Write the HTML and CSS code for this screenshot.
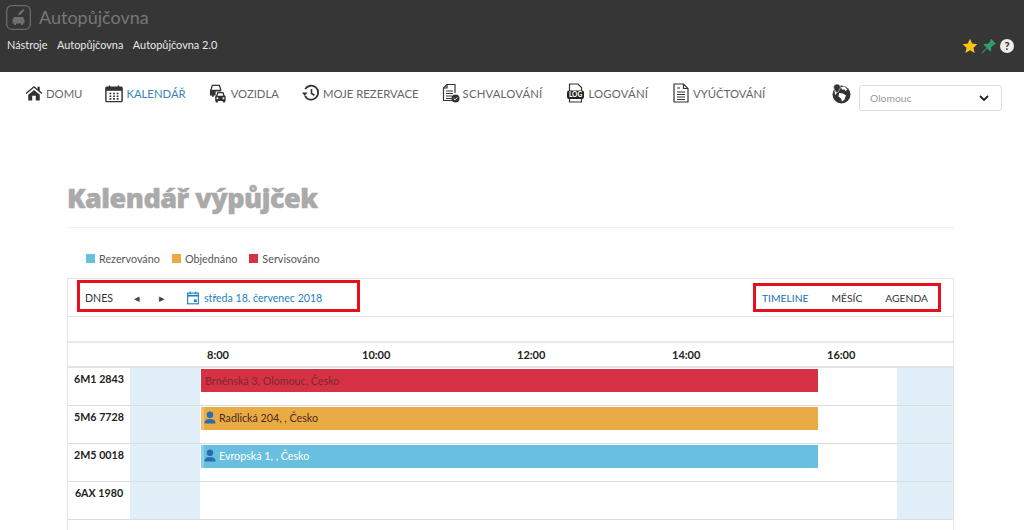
FILE: index.html
```html
<!DOCTYPE html>
<html lang="cs">
<head>
    <meta charset="UTF-8">
    <title>Kalendář výpůjček</title>
    <link rel="stylesheet" href="styles.css">
</head>
<body>
<div class="top">
    <div class="brand">
        <span class="brand-icon">
            <svg width="25" height="25" viewBox="0 0 25 25" fill="none">
                <rect x="0.700" y="0.700" width="23.600" height="23.600" rx="5" stroke="#6a6a6a" stroke-width="1.300"/>
                <path d="M6.500 18.500v-3.500l1.500-3h9l1.500 3v3.500h-1.500v1.500h-2v-1.500h-5v1.500h-2v-1.500z" fill="#6f6f6f"/>
                <path d="M12 10.500l1-3 4.500-3.500 1 1-3.500 4.500z" fill="#6f6f6f"/>
            </svg>
        </span>
        <span class="brand-name">Autopůjčovna</span>
    </div>
    <div class="top-row">
        <ul class="top-links">
            <li>Nástroje</li>
            <li>Autopůjčovna</li>
            <li>Autopůjčovna 2.0</li>
        </ul>
        <div class="top-icons">
            <svg width="16" height="16" viewBox="0 0 16 16"><path d="M8 .8l2.200 4.800 5.200.6-3.900 3.500 1.100 5.200L8 12.300l-4.600 2.600 1.100-5.200L.6 6.200l5.200-.6z" fill="#f5c518"/></svg>
            <svg width="16" height="16" viewBox="0 0 16 16"><path d="M10 .8l5 5-1 .8-1-.2-3 3 .2 3-1 1-3-3-4.500 4.600-.9.2.2-.9L5.600 9.700l-3-3 1-1 3 .2 3-3-.2-1z" fill="#2f9e6b"/></svg>
            <span class="help">?</span>
        </div>
    </div>
</div>

<nav class="nav">
    <a class="nav-item">
        <svg width="18" height="16" viewBox="0 0 20 18"><path d="M10 1L0.500 9l1 1.200L10 3.200l8.500 7 1-1.200-3-2.500V2h-2.500v2.400zM3.500 11v6.500h4.500V12h4v5.500h4.500V11L10 5.500z" fill="#333"/></svg>
        DOMU
    </a>
    <a class="nav-item active">
        <svg width="18" height="19" viewBox="0 0 20 20" fill="none"><rect x="1" y="3" width="18" height="16" rx="1" stroke="#333" stroke-width="1.600"/><rect x="1" y="3" width="18" height="4" fill="#333"/><path d="M5 1v4M15 1v4" stroke="#333" stroke-width="1.600"/><path d="M5 10h2M9 10h2M13 10h2M5 13h2M9 13h2M13 13h2M5 16h2M9 16h2M13 16h2" stroke="#333" stroke-width="1.800"/></svg>
        KALENDÁŘ
    </a>
    <a class="nav-item">
        <svg width="19" height="19" viewBox="0 0 20 20" fill="none">
            <path d="M2 6.500l1.500-5h7.500l1.500 5" stroke="#333" stroke-width="1.400"/>
            <path d="M1 6h12v2H7v4H5v1.500H3V12H1z" fill="#333"/>
            <path d="M7 19.500v-1.500h-.5v-5l1-1 1.300-3.500h6.400l1.300 3.500 1 1v5H17v1.500h-2.500V18h-5v1.500z" fill="#333"/>
            <path d="M9 12.300h6l-.8-2.500H9.800z" fill="#fff"/>
            <circle cx="8.800" cy="15" r="1" fill="#fff"/>
            <circle cx="15.200" cy="15" r="1" fill="#fff"/>
        </svg>
        VOZIDLA
    </a>
    <a class="nav-item">
        <svg width="18" height="18" viewBox="0 0 18 18" fill="none"><path d="M3.200 5A7 7 0 1 1 3 12" stroke="#333" stroke-width="1.800"/><path d="M0 8.500h5.500L2.700 12z" fill="#333"/><path d="M9.500 5v4.500l3 1.800" stroke="#333" stroke-width="1.600"/></svg>
        MOJE REZERVACE
    </a>
    <a class="nav-item spaced">
        <svg width="18" height="20" viewBox="0 0 18 20" fill="none"><path d="M11 17.500H1.500V5L5 1.500h8V10" stroke="#333" stroke-width="1.200"/><path d="M1.500 5H5V1.500M4 8h7M4 10.500h7M4 13h6M4 15.500h6" stroke="#333" stroke-width="1.200"/><circle cx="13.500" cy="15.500" r="4" fill="#333"/><path d="M11.700 15.500l1.300 1.300 2.300-2.300" stroke="#fff" stroke-width="1"/></svg>
        SCHVALOVÁNÍ
    </a>
    <a class="nav-item spaced log">
        <svg width="17" height="20" viewBox="0 0 17 20" fill="none"><path d="M2.500 8V1h8.500l3.500 3.500V8M2.500 15v4h12v-4" stroke="#333" stroke-width="1.200"/><rect x="0" y="7.500" width="17" height="8.500" rx="2" fill="#222"/><text x="8.500" y="14.200" text-anchor="middle" class="log-text">LOG</text></svg>
        LOGOVÁNÍ
    </a>
    <a class="nav-item bill">
        <svg width="16" height="20" viewBox="0 0 16 20" fill="none"><path d="M1 1h9.500L15 5.500V19H1z" stroke="#333" stroke-width="1.200"/><path d="M10.500 1v4.500H15M4 5h3M4 9h8M4 11.500h8M4 14h8M4 16.500h8" stroke="#333" stroke-width="1.200"/></svg>
        VYÚČTOVÁNÍ
    </a>
    <div class="place">
        <svg class="globe" width="19" height="20" viewBox="0 0 19 20"><circle cx="9.500" cy="10.500" r="9" fill="#333"/><path d="M9 3l3.500-.5 3 3-2 1.500-1-1.500H10zM7 9l4 .5 3 2-1.500 4-2.500 2-1-3-2.500-2zM2.500 6.500L5 9l-2 2z" fill="#fff"/><path d="M5 0a3.400 3.400 0 0 1 3.400 3.400C8.400 5.500 5 9 5 9S1.600 5.500 1.600 3.400A3.400 3.400 0 0 1 5 0z" fill="#333" stroke="#fff" stroke-width=".6"/></svg>
        <div class="select">
            <span>Olomouc</span>
            <svg width="10" height="7" viewBox="0 0 10 7" fill="none"><path d="M1 1l4 4 4-4" stroke="#222" stroke-width="1.800"/></svg>
        </div>
    </div>
</nav>

<main class="page">
    <h1>Kalendář výpůjček</h1>
    <ul class="legend">
        <li><i class="sw blue"></i>Rezervováno</li>
        <li><i class="sw orange"></i>Objednáno</li>
        <li><i class="sw red"></i>Servisováno</li>
    </ul>

    <div class="calendar">
        <div class="toolbar">
            <div class="tool-left mark">
                <span class="today">DNES</span>
                <span class="arrow">◂</span>
                <span class="arrow">▸</span>
                <span class="date">
                    <svg width="12" height="14" viewBox="0 0 13 14" fill="none"><rect x="0.700" y="1.700" width="11.600" height="11.600" stroke="#1a7fc1" stroke-width="1.200"/><path d="M0.700 4.500h11.600" stroke="#1a7fc1" stroke-width="1.800"/><path d="M3.500 0v3M9.500 0v3" stroke="#1a7fc1" stroke-width="1.200"/><rect x="7.500" y="8.500" width="3" height="3" fill="#1a7fc1"/></svg>
                    středa 18. červenec 2018
                </span>
            </div>
            <div class="tool-right mark">
                <span class="current">TIMELINE</span>
                <span>MĚSÍC</span>
                <span>AGENDA</span>
            </div>
        </div>
        <div class="spacer"></div>
        <div class="hours">
            <span>8:00</span>
            <span>10:00</span>
            <span>12:00</span>
            <span>14:00</span>
            <span>16:00</span>
        </div>
        <div class="row">
            <div class="car">6M1 2843</div>
            <div class="off"></div>
            <div class="track"><div class="bar red dark">Brněnská 3, Olomouc, Česko</div></div>
            <div class="off"></div>
        </div>
        <div class="row">
            <div class="car">5M6 7728</div>
            <div class="off"></div>
            <div class="track"><div class="bar orange edge">
                <svg class="user" width="12" height="13" viewBox="0 0 13 14"><circle cx="6.500" cy="4" r="3.500"/><path d="M0.500 13.500c0-3.500 2-5 6-5s6 1.500 6 5z"/></svg>
                Radlická 204, , Česko</div></div>
            <div class="off"></div>
        </div>
        <div class="row">
            <div class="car">2M5 0018</div>
            <div class="off"></div>
            <div class="track"><div class="bar blue edge light">
                <svg class="user" width="12" height="13" viewBox="0 0 13 14"><circle cx="6.500" cy="4" r="3.500"/><path d="M0.500 13.500c0-3.500 2-5 6-5s6 1.500 6 5z"/></svg>
                Evropská 1, , Česko</div></div>
            <div class="off"></div>
        </div>
        <div class="row">
            <div class="car">6AX 1980</div>
            <div class="off"></div>
            <div class="track"></div>
            <div class="off"></div>
        </div>
    </div>
</main>
</body>
</html>
```

FILE: styles.css
```css
* {
    padding: 0;
    margin: 0;
    list-style: none;
    box-sizing: border-box;
}

body {
    font-family: Lato, "Open Sans", "Liberation Sans", sans-serif;
    font-size: 11px;
    color: #333;
    background: #fff;
    overflow: hidden;
}

.top {
    height: 72px;
    background: #363636;
    color: #eee;
    padding: 5px 7px 0 6px;
}

.brand {
    display: flex;
    align-items: center;
    gap: 8px;
    height: 25px;
}

.brand-icon {
    display: flex;
}

.brand-name {
    font-size: 18px;
    line-height: 22px;
    margin-bottom: 2px;
    color: #777;
}

.top-row {
    display: flex;
    justify-content: space-between;
    align-items: center;
    margin-top: 5px;
    padding-left: 1px;
}

.top-links {
    display: flex;
    gap: 9.500px;
    font-size: 10.900px;
    color: #e8e8e8;
}

.top-icons {
    display: flex;
    align-items: center;
    gap: 3px;
    margin-top: 3px;
    padding-right: 3px;
}

.help {
    width: 14px;
    height: 14px;
    border-radius: 50%;
    background: #eee;
    color: #333;
    font-size: 11px;
    font-weight: 900;
    line-height: 14px;
    text-align: center;
}

.nav {
    display: flex;
    align-items: center;
    height: 52px;
    padding: 0 22px 0 25px;
    font-size: 11.300px;
    color: #666;
    white-space: nowrap;
}

.nav-item {
    display: flex;
    align-items: center;
    gap: 3px;
    margin: 0 23px 10px 0;
}

.nav-item.active {
    color: #3a7fbd;
}

.nav-item.spaced {
    letter-spacing: .2px;
    margin-right: 25px;
}

.nav-item.log {
    gap: 4px;
}

.nav-item.bill {
    gap: 4px;
}

.log-text {
    font-family: Lato, sans-serif;
    font-size: 6.500px;
    font-weight: 900;
    letter-spacing: 0;
    fill: #fff;
}

.place {
    display: flex;
    align-items: center;
    gap: 8px;
    margin-left: auto;
}

.globe {
    margin-bottom: 8px;
}

.select {
    display: flex;
    align-items: center;
    justify-content: space-between;
    width: 143px;
    height: 26px;
    padding: 0 12px 0 10px;
    border: 1px solid #ddd;
    border-radius: 3px;
    font-size: 10.300px;
    color: #999;
}

.page {
    padding: 0 70px 0 67px;
}

h1 {
    margin-top: 56px;
    padding-bottom: 11px;
    border-bottom: 1px solid #eee;
    font-family: "Open Sans", sans-serif;
    font-size: 27px;
    font-weight: 800;
    letter-spacing: -.5px;
    line-height: 36px;
    color: #aaa;
    -webkit-text-stroke: .5px #aaa;
}

.legend {
    display: flex;
    gap: 12px;
    margin: 23px 0 12px 19px;
    font-size: 10.800px;
    color: #555;
    line-height: 15px;
}

.legend li {
    display: flex;
    align-items: center;
    gap: 4px;
}

.sw {
    width: 9px;
    height: 9px;
}

.calendar {
    height: 252px;
    border: 1px solid #e4e4e4;
    border-bottom: 0;
}

.toolbar {
    display: flex;
    justify-content: space-between;
    align-items: flex-start;
    height: 38px;
    padding: 1px 12px 0 9px;
    border-bottom: 1px solid #e4e4e4;
}

.mark {
    display: flex;
    align-items: center;
    border: 3px solid #e3101f;
}

.tool-left {
    width: 283px;
    height: 32px;
    padding: 3px 0 0 5px;
    font-size: 10.600px;
}

.tool-right {
    width: 188px;
    height: 29px;
    margin-top: 3px;
    padding-left: 6px;
    gap: 23px;
    font-size: 10.300px;
}

.today {
    width: 49px;
}

.arrow {
    width: 25px;
    font-size: 11px;
    color: #444;
}

.date {
    display: flex;
    align-items: center;
    gap: 5px;
    margin-left: 3px;
    color: #1a7fc1;
}

.current {
    color: #1a6fb5;
}

.spacer {
    height: 26px;
    border-bottom: 2px solid #e8e8e8;
}

.hours {
    display: flex;
    align-items: center;
    height: 25px;
    padding-left: 139px;
    border-bottom: 2px solid #e2e2e2;
    font-weight: 700;
    color: #222;
    overflow: hidden;
}

.hours span {
    flex: none;
    width: 155px;
}

.row {
    display: grid;
    grid-template-columns: 62px 70px 697px 1fr;
    height: 38px;
    border-bottom: 1px solid #dcdcdc;
}

.car {
    padding-top: 4px;
    font-size: 10.700px;
    font-weight: 700;
    color: #222;
    text-align: center;
}

.off {
    background: #e1eff9;
}

.track {
    padding: 1px 0 0 1px;
}

.bar {
    display: flex;
    align-items: center;
    gap: 3px;
    width: 617px;
    height: 23px;
    padding-left: 4px;
    font-size: 10.700px;
    color: #4a2a20;
}

.bar.dark {
    color: #7a2a30;
}

.bar.light {
    color: #fff;
}

.edge {
    padding: 0 0 2px 0;
    border-left: 3px solid rgba(255, 255, 255, .25);
}

.user {
    fill: #2b6cb0;
}

.blue {
    background: #68bfe0;
}

.orange {
    background: #eaab45;
}

.red {
    background: #d63145;
}
```
